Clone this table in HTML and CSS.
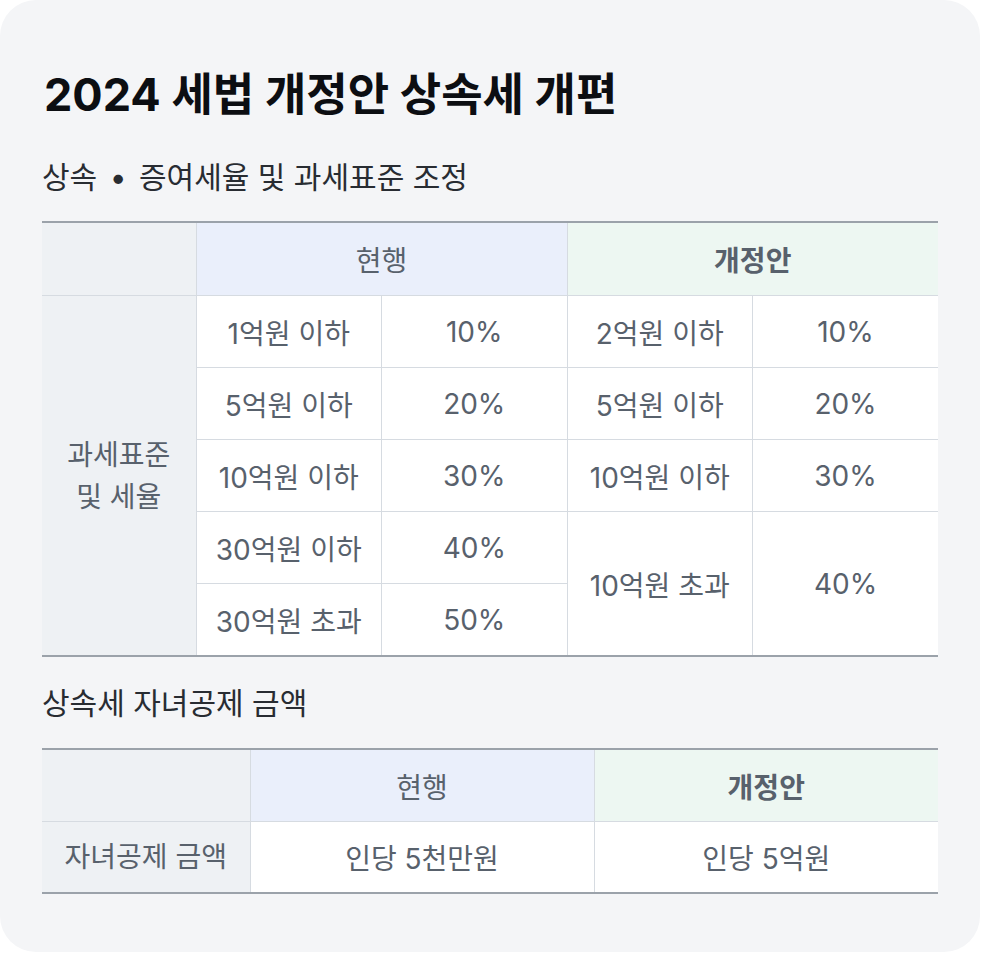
FILE: index.html
```html
<!DOCTYPE html>
<html lang="ko">
<head>
    <meta charset="utf-8">
    <link rel="stylesheet" href="styles.css">
</head>
<body>
    <div class="card">
        <h1 class="title">2024 세법 개정안 상속세 개편</h1>

        <div class="section_title">상속 <span class="dot">•</span> 증여세율 및 과세표준 조정</div>
        <table class="rate_table">
            <colgroup>
                <col class="col_label">
                <col class="col_cell">
                <col class="col_cell">
                <col class="col_cell">
                <col class="col_cell">
            </colgroup>
            <tr class="head_row">
                <td class="label"></td>
                <td colspan="2" class="head_now">현행</td>
                <td colspan="2" class="head_new">개정안</td>
            </tr>
            <tr>
                <td rowspan="5" class="label">과세표준<br>및 세율</td>
                <td>1억원 이하</td>
                <td>10%</td>
                <td>2억원 이하</td>
                <td>10%</td>
            </tr>
            <tr>
                <td>5억원 이하</td>
                <td>20%</td>
                <td>5억원 이하</td>
                <td>20%</td>
            </tr>
            <tr>
                <td>10억원 이하</td>
                <td>30%</td>
                <td>10억원 이하</td>
                <td>30%</td>
            </tr>
            <tr>
                <td>30억원 이하</td>
                <td>40%</td>
                <td rowspan="2">10억원 초과</td>
                <td rowspan="2">40%</td>
            </tr>
            <tr>
                <td>30억원 초과</td>
                <td>50%</td>
            </tr>
        </table>

        <div class="section_title second">상속세 자녀공제 금액</div>
        <table class="child_table">
            <colgroup>
                <col class="col_label2">
                <col>
                <col>
            </colgroup>
            <tr class="head_row">
                <td class="label"></td>
                <td class="head_now">현행</td>
                <td class="head_new">개정안</td>
            </tr>
            <tr>
                <td class="label">자녀공제 금액</td>
                <td>인당 5천만원</td>
                <td>인당 5억원</td>
            </tr>
        </table>
    </div>
</body>
</html>
```

FILE: styles.css
```css
html, body {
    margin: 0;
    padding: 0;
    background-color: white;
}
body {
    font-family: "Inter", "Noto Sans CJK KR", sans-serif;
}
.card {
    width: 980px;
    height: 952px;
    box-sizing: border-box;
    background-color: rgb(244,245,247);
    border-radius: 36px;
    padding: 66px 42px 0 42px;
}
.title {
    margin: 0 0 0 2px;
    font-size: 45px;
    font-weight: 700;
    line-height: 58px;
    color: rgb(12,14,18);
}
.section_title {
    font-size: 30px;
    line-height: 40px;
    color: rgb(40,44,50);
    margin: 33px 0 24px 0;
}
.section_title .dot {
    margin: 0 4px;
}
.section_title.second {
    margin: 26px 0 25px 0;
}
table {
    width: 896px;
    border-collapse: collapse;
    table-layout: fixed;
    border-top: 2px solid rgb(155,162,170);
    border-bottom: 2px solid rgb(155,162,170);
}
td {
    border: 1px solid rgb(214,219,225);
    background-color: white;
    text-align: center;
    font-size: 28px;
    color: rgb(88,97,108);
    height: 71px;
    padding: 0;
}
.rate_table .head_row td {
    height: 72px;
}
.child_table tr:last-child td {
    height: 70px;
}
tr:first-child td {
    border-top: none;
}
tr:last-child td, td[rowspan="5"], .rate_table td[rowspan="2"] {
    border-bottom: none;
}
td:first-child {
    border-left: none;
}
td:last-child {
    border-right: none;
}
.col_label {
    width: 154px;
}
.col_label2 {
    width: 208px;
}
.label {
    background-color: rgb(238,241,244);
    line-height: 42px;
}
.head_now {
    background-color: rgb(234,239,251);
}
.head_new {
    background-color: rgb(237,247,242);
    font-weight: 600;
}
```
